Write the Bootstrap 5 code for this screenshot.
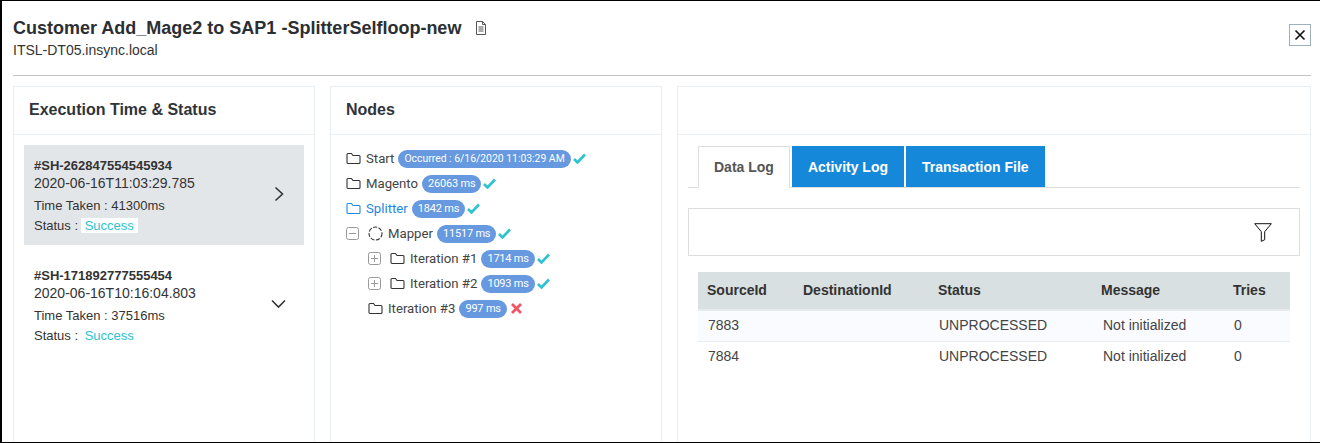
<!DOCTYPE html>
<html>

<head>
	<meta charset="utf-8">
	<meta name="viewport" content="width=device-width, initial-scale=1">
	<title>Execution Details</title>
	<link href="https://cdn.jsdelivr.net/npm/bootstrap@5.3.3/dist/css/bootstrap.min.css" rel="stylesheet">
	<script src="https://cdn.jsdelivr.net/npm/bootstrap@5.3.3/dist/js/bootstrap.bundle.min.js"></script>
	<style>
		html, body { height: 443px; overflow: hidden; }
		body { font-family: "Liberation Sans", Arial, sans-serif; font-size: 14px; color: #333; background: #fff; }

		/* Marco del modal */
		.modal-frame { height: 443px; border: 0 solid #000; border-width: 1px 0 1px 2px; padding: 0 9px 0 11px; overflow: hidden; }
		.frame-head { height: 75px; border-bottom: 1px solid #c4c4c4; padding-top: 16px; }
		.frame-title { font-size: 18px; line-height: 22px; font-weight: 700; color: #2b2f33; margin: 0; }
		.frame-sub { font-size: 14px; line-height: 18px; margin-top: 2px; color: #333; }
		.close-box { width: 22px; height: 22px; border: 1px solid #9fb0bb; background: #fff; padding: 0; margin-top: 7px; line-height: 0; }
		.doc-icon { margin-left: 14px; }
		.panels { display: grid; grid-template-columns: 302px 332px 634px; gap: 15px; margin-top: 10px; height: 500px; }
		.panel-box { border: 1px solid #e9eef2; border-radius: 0; background: #fff; }
		.panel-box > .card-header { height: 48px; padding: 12px 15px 0; background: #fff; border-bottom: 1px solid #e9eef2; border-radius: 0; font-size: 16px; line-height: 22px; font-weight: 700; color: #2f343a; }

		/* Ejecuciones */
		.exec-list { padding: 10px; }
		.exec-item { height: 100px; padding: 13px 10px 16px 10px; }
		.exec-item.is-open { background: #e3e6e9; }
		.exec-item + .exec-item { margin-top: 10px; }
		.exec-id { font-size: 13px; line-height: 15px; font-weight: 700; color: #333; }
		.exec-date { font-size: 14px; line-height: 20px; }
		.exec-line { font-size: 13px; line-height: 20px; }
		.exec-line.first-line { margin-top: 3px; }
		.ok-text { color: #2dc3d0; padding: 0 4px; margin-left: -1px; }
		.is-open .ok-text { background: #fff; }
		.exec-arrow { margin-right: 10px; }
		.exec-arrow.is-down { margin-right: 8px; }

		/* Árbol de nodos */
		.node-tree { padding: 11px 15px; font-family: Roboto, "Liberation Sans", sans-serif; font-size: 13.2px; color: #444; }
		.node-row { height: 25px; gap: 4px; white-space: nowrap; }
		.node-row.lvl1 { padding-left: 22px; }
		.node-row.is-active { color: #1e88e5; }
		.node-name { margin-left: 1px; }
		.tree-gap { margin-left: 1px; }
		.time-pill { background: #6699e0; color: #fff; font-size: 11px; letter-spacing: -0.2px; line-height: 18px; height: 18px; padding: 0 6px; border-radius: 9px; }
		.time-pill.tiny { font-size: 10.4px; letter-spacing: 0; }
		.plus-box { flex: none; }
		.tick-mark { margin-left: -2px; }

		/* Pestañas */
		.tab-area { padding: 11px 10px 0; }
		.log-tabs { border-bottom: 1px solid #ddd; gap: 2px; padding-left: 10px; }
		.log-tabs .nav-link { height: 41px; border: 0; border-radius: 0; margin: 0; padding: 0 16px; line-height: 43px; font-size: 14px; font-weight: 700; color: #fff; background: #1688da; }
		.log-tabs .nav-link.active { color: #555; background: #fff; border: 1px solid #ddd; border-bottom-color: #fff; line-height: 41px; height: 42px; margin-bottom: -1px; padding: 0 15px; }
		.filter-box { height: 48px; margin-top: 20px; border: 1px solid #ddd; padding-right: 27px; }
		.log-table { margin: 16px 10px 0; width: 592px; font-size: 14px; table-layout: fixed; }
		.log-table th { background: #d8e0e1; height: 38px; padding: 0 9px; vertical-align: middle; font-weight: 700; color: #333; border-bottom: 2px solid #e6ecee; }
		.log-table td { height: 31px; padding: 0 10px; vertical-align: middle; color: #444; border-bottom: 1px solid #e9eef2; }
		.log-table td:nth-child(4) { padding-left: 11px; }
		.log-table tbody tr:first-child td { background: #fafbfe; }
		.log-table tbody tr:last-child td { border-bottom: 0; }
	</style>
</head>

<body>
<div class="modal-frame">
	<div class="frame-head d-flex justify-content-between">
		<div>
			<div class="d-flex align-items-center">
				<h1 class="frame-title">Customer Add_Mage2 to SAP1 -SplitterSelfloop-new</h1>
				<svg class="doc-icon" width="12" height="14" viewBox="0 0 12 14" fill="none" stroke="#555"><path d="M1.500.5h6l3 3v10h-9z"/><path d="M7.500.5v3h3M3.500 6h5M3.500 8h5M3.500 10h5"/></svg>
			</div>
			<div class="frame-sub">ITSL-DT05.insync.local</div>
		</div>
		<button class="close-box" type="button" aria-label="Close">
			<svg width="12" height="12" viewBox="0 0 12 12" stroke="#111" stroke-width="1.6"><path d="M1.500 1.500l9 9M10.500 1.500l-9 9"/></svg>
		</button>
	</div>

	<div class="panels">
		<!-- Ejecuciones -->
		<div class="card panel-box">
			<div class="card-header">Execution Time &amp; Status</div>
			<div class="exec-list">
				<div class="exec-item is-open d-flex justify-content-between align-items-center">
					<div class="align-self-start">
						<div class="exec-id">#SH-262847554545934</div>
						<div class="exec-date">2020-06-16T11:03:29.785</div>
						<div class="exec-line first-line">Time Taken : 41300ms</div>
						<div class="exec-line">Status : <span class="ok-text">Success</span></div>
					</div>
					<svg class="exec-arrow" width="10" height="16" viewBox="0 0 10 16" fill="none" stroke="#333" stroke-width="1.6"><path d="M1.500 1.500l7 6.500-7 6.500"/></svg>
				</div>
				<div class="exec-item d-flex justify-content-between align-items-center">
					<div class="align-self-start">
						<div class="exec-id">#SH-171892777555454</div>
						<div class="exec-date">2020-06-16T10:16:04.803</div>
						<div class="exec-line first-line">Time Taken : 37516ms</div>
						<div class="exec-line">Status : <span class="ok-text">Success</span></div>
					</div>
					<svg class="exec-arrow is-down" width="15" height="10" viewBox="0 0 15 10" fill="none" stroke="#333" stroke-width="1.6"><path d="M1 1.500l6.500 6.500L14 1.500"/></svg>
				</div>
			</div>
		</div>

		<!-- Nodos -->
		<div class="card panel-box">
			<div class="card-header">Nodes</div>
			<div class="node-tree" id="nodeTree"></div>
		</div>

		<!-- Logs -->
		<div class="card panel-box">
			<div class="card-header"></div>
			<div class="tab-area">
				<ul class="nav nav-tabs log-tabs">
					<li class="nav-item"><a class="nav-link active" href="#">Data Log</a></li>
					<li class="nav-item"><a class="nav-link" href="#">Activity Log</a></li>
					<li class="nav-item"><a class="nav-link" href="#">Transaction File</a></li>
				</ul>
				<div class="filter-box d-flex justify-content-end align-items-center">
					<svg width="18" height="19" viewBox="0 0 18 19" fill="none" stroke="#111"><path d="M.7.7h16.600l-6.600 8v8l-3.400 1.600V8.700z"/></svg>
				</div>
				<table class="table log-table mb-0">
					<thead>
					<tr>
						<th style="width:96px">SourceId</th>
						<th style="width:135px">DestinationId</th>
						<th style="width:163px">Status</th>
						<th style="width:132px">Message</th>
						<th>Tries</th>
					</tr>
					</thead>
					<tbody>
					<tr><td>7883</td><td></td><td>UNPROCESSED</td><td>Not initialized</td><td>0</td></tr>
					<tr><td>7884</td><td></td><td>UNPROCESSED</td><td>Not initialized</td><td>0</td></tr>
					</tbody>
				</table>
			</div>
		</div>
	</div>
</div>

<script>
	// Iconos del árbol
	const folder = (color) => `<svg width="15" height="13" viewBox="0 0 15 13" fill="none" stroke="${color}" stroke-width="1.1"><path d="M1 2.500a1 1 0 0 1 1-1h3.500l1.500 2h6a1 1 0 0 1 1 1v6a1 1 0 0 1-1 1H2a1 1 0 0 1-1-1z"/></svg>`;
	const box = (minus) => `<svg class="plus-box" width="13" height="13" viewBox="0 0 13 13" fill="none" stroke="#999"><rect x=".5" y=".5" width="12" height="12" rx="2"/><path d="M3 6.500h7${minus ? '' : 'M6.500 3v7'}"/></svg>`;
	const spinner = '<svg width="15" height="15" viewBox="0 0 15 15" fill="none" stroke="#333" stroke-width="1.100" stroke-dasharray="4 1.500"><circle cx="7.500" cy="7.500" r="6.500"/></svg>';
	const tick = '<svg class="tick-mark" width="13" height="11" viewBox="0 0 13 11" fill="none" stroke="#2dc3d0" stroke-width="2.600"><path d="M1 6l3.500 3.500L12 1.500"/></svg>';
	const cross = '<svg width="11" height="11" viewBox="0 0 11 11" fill="none" stroke="#ee5566" stroke-width="2.800"><path d="M1 1l9 9M10 1l-9 9"/></svg>';
	const gap = '<span class="tree-gap"></span>';

	const nodes = [
		{ name: 'Start', time: 'Occurred : 6/16/2020 11:03:29 AM', tiny: true, icons: folder('#333') },
		{ name: 'Magento', time: '26063 ms', icons: folder('#333') },
		{ name: 'Splitter', time: '1842 ms', icons: folder('#1e88e5'), active: true },
		{ name: 'Mapper', time: '11517 ms', icons: box(true) + gap + spinner },
		{ name: 'Iteration #1', time: '1714 ms', icons: box(false) + gap + folder('#333'), cls: 'lvl1' },
		{ name: 'Iteration #2', time: '1093 ms', icons: box(false) + gap + folder('#333'), cls: 'lvl1' },
		{ name: 'Iteration #3', time: '997 ms', icons: folder('#333'), cls: 'lvl1', failed: true }
	];

	document.getElementById('nodeTree').innerHTML = nodes.map(n => `
		<div class="node-row d-flex align-items-center ${n.cls || ''} ${n.active ? 'is-active' : ''}">
			${n.icons}<span class="node-name">${n.name}</span>
			<span class="time-pill ${n.tiny ? 'tiny' : ''}">${n.time}</span>${n.failed ? cross : tick}
		</div>`).join('');
</script>
</body>

</html>
